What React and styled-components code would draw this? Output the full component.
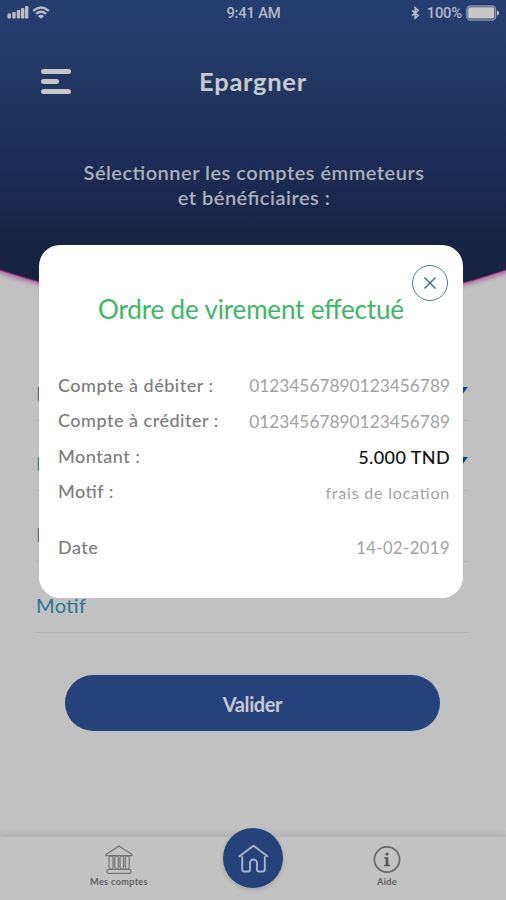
import React from "react";
import styled, { createGlobalStyle } from "styled-components";

const details = [
  { label: "Compte à débiter :", value: "01234567890123456789", size: 17.3, space: 0.02 },
  { label: "Compte à créditer :", value: "01234567890123456789", size: 17.3, space: 0.02 },
  { label: "Montant :", value: "5.000 TND", size: 18, space: 0.4, strong: true },
  { label: "Motif :", value: "frais de location", size: 16, space: 0.8 },
  { label: "Date", value: "14-02-2019", size: 16.5, space: 0.5, gap: 20 },
];

const fields = [
  { label: "Bt", select: true },
  { label: "Pr", select: true },
  { label: "Mt" },
  { label: "Motif" },
];

const App = () => {
  return (
    <>
      <GlobalStyle />
      <Screen>
        <Header>
          <HeaderShape />
          <StatusBar>
            <Signal />
            <span>9:41 AM</span>
            <Battery />
          </StatusBar>
          <TitleRow>
            <MenuButton aria-label="Menu">
              <MenuLine />
              <MenuLine $short />
              <MenuLine />
            </MenuButton>
            <Title>Epargner</Title>
          </TitleRow>
          <Subtitle>
            <div>Sélectionner les comptes émmeteurs</div>
            <div>et bénéficiaires :</div>
          </Subtitle>
        </Header>
        <Form>
          {fields.map((field) => (
            <Field key={field.label}>
              {field.label}
              {field.select && <Arrow />}
            </Field>
          ))}
          <SubmitButton>Valider</SubmitButton>
        </Form>
        <BottomNav>
          <NavItem>
            <BankIcon />
            <span>Mes comptes</span>
          </NavItem>
          <HomeButton aria-label="Accueil">
            <HomeIcon />
          </HomeButton>
          <NavItem>
            <InfoIcon />
            <span>Aide</span>
          </NavItem>
        </BottomNav>
        <Modal role="dialog">
          <CloseButton aria-label="Fermer">
            <svg width="12" height="12" viewBox="0 0 12 12" fill="none" stroke="#356682" strokeWidth="1.4">
              <path d="M.5.5l11 11M11.5.5l-11 11" />
            </svg>
          </CloseButton>
          <ModalTitle>Ordre de virement effectué</ModalTitle>
          <DetailList>
            {details.map((row) => (
              <DetailRow key={row.label} $gap={row.gap}>
                <DetailLabel>{row.label}</DetailLabel>
                <DetailValue $size={row.size} $space={row.space} $strong={row.strong}>
                  {row.value}
                </DetailValue>
              </DetailRow>
            ))}
          </DetailList>
        </Modal>
      </Screen>
    </>
  );
};
export default App;

const HeaderShape = () => (
  <Backdrop width="506" height="330" viewBox="0 0 506 330">
    <defs>
      <linearGradient id="night" x1="0" y1="0" x2="0" y2="1">
        <stop offset="0" stopColor="#253f72" />
        <stop offset="0.3" stopColor="#20365f" />
        <stop offset="0.5" stopColor="#1c2e58" />
        <stop offset="0.75" stopColor="#172444" />
        <stop offset="1" stopColor="#14203d" />
      </linearGradient>
      <filter id="glow" x="-5%" y="-10%" width="110%" height="130%">
        <feGaussianBlur stdDeviation="2.6" />
      </filter>
    </defs>
    <path d="M-10 267Q253 354 516 267" fill="none" stroke="#a0408c" strokeWidth="4" filter="url(#glow)" />
    <path d="M0 0H506V270Q253 354 0 270Z" fill="url(#night)" />
    <path d="M0 270Q253 354 506 270" fill="none" stroke="#8c2878" strokeWidth="1" />
  </Backdrop>
);

const Signal = () => (
  <svg width="46" height="16" viewBox="0 0 46 16" fill="#b9bec9">
    <rect x="0.5" y="8.5" width="3.4" height="5" rx="0.8" />
    <rect x="5.3" y="7" width="3.4" height="6.5" rx="0.8" />
    <rect x="9.8" y="5" width="3.4" height="8.5" rx="0.8" />
    <rect x="14" y="3" width="3.4" height="10.5" rx="0.8" />
    <rect x="18" y="1" width="3.4" height="12.5" rx="0.8" />
    <g fill="none" stroke="#b9bec9" strokeWidth="2.3">
      <path d="M26.2 5.9Q34 -0.8 41.8 5.9" />
      <path d="M29 8.8Q34 4.6 39 8.8" />
    </g>
    <path d="M31 11Q34 8.6 37 11L34 13.8Z" />
  </svg>
);

const Battery = () => (
  <BatteryBox>
    <svg width="9" height="14" viewBox="0 0 10 16" fill="none" stroke="#b9bec9" strokeWidth="1.7">
      <path d="M1 5l7 6-3.4 3V2L8 5l-7 6" />
    </svg>
    <span>100%</span>
    <svg width="34" height="16" viewBox="0 0 34 16">
      <rect x="1" y="1" width="28.5" height="14" rx="3.5" fill="none" stroke="#8c95a9" strokeWidth="1.6" />
      <rect x="2.2" y="2.2" width="26" height="11.2" rx="2" fill="#c8c8c8" />
      <path d="M31 5.5q2.2.8 2.2 2.5t-2.2 2.5z" fill="#b9bec9" />
    </svg>
  </BatteryBox>
);

const Arrow = () => (
  <svg width="12" height="8" viewBox="0 0 12 8">
    <path d="M0 0H12L6 8Z" fill="#104a86" />
  </svg>
);

const BankIcon = () => (
  <svg width="28" height="29" viewBox="0 0 28 29" fill="none" stroke="#747474" strokeWidth="1.2" strokeLinejoin="round">
    <path d="M1 9.5L14 1l13 8.5v1.2H1z" />
    <rect x="4" y="11" width="4" height="13" rx="1.8" />
    <rect x="9.7" y="11" width="3.6" height="13" rx="1.8" />
    <rect x="15" y="11" width="3.6" height="13" rx="1.8" />
    <rect x="20.3" y="11" width="4" height="13" rx="1.8" />
    <rect x="2" y="24.5" width="24" height="3.8" rx="1.2" />
  </svg>
);

const HomeIcon = () => (
  <svg width="31" height="29" viewBox="0 0 31 29" fill="none" stroke="#a9b5ca" strokeWidth="1.9" strokeLinejoin="round" strokeLinecap="round">
    <path d="M1.5 12.2L15.5 1.8l14 10.4" />
    <path d="M4.2 13V25.5a2 2 0 0 0 2 2H10a2 2 0 0 0 2-2V19a3.5 3.5 0 0 1 7 0v6.5a2 2 0 0 0 2 2h3.8a2 2 0 0 0 2-2V13" />
  </svg>
);

const InfoIcon = () => (
  <svg width="28" height="29" viewBox="0 0 28 29">
    <circle cx="14" cy="14.5" r="12.6" fill="none" stroke="#666666" strokeWidth="1.6" />
    <circle cx="14" cy="9" r="1.6" fill="#555555" />
    <path d="M11.2 12.2h4.1v7.5h1.7v1.6h-5.8v-1.6h1.5v-5.9h-1.5z" fill="#555555" />
  </svg>
);

const GlobalStyle = createGlobalStyle`
  body {
    margin: 0;
    background: #c1c1c1;
  }
  * {
    box-sizing: border-box;
  }
  button {
    border: none;
    padding: 0;
    font-family: inherit;
    cursor: pointer;
  }
`;
const Screen = styled.main`
  position: relative;
  width: 506px;
  height: 900px;
  display: flex;
  flex-direction: column;
  overflow: hidden;
  background: #c1c1c1;
  font-family: Lato, Carlito, sans-serif;
  font-feature-settings: "liga" 1;
`;
const Header = styled.header`
  position: relative;
  height: 350px;
  flex: none;
  color: #c6c9cf;
`;
const Backdrop = styled.svg`
  position: absolute;
  top: 0;
  left: 0;
`;
const StatusBar = styled.div`
  position: relative;
  display: grid;
  grid-template-columns: 1fr auto 1fr;
  align-items: center;
  height: 25px;
  padding: 0 6px 0 7px;
  font-family: Roboto, sans-serif;
  font-size: 14.8px;
  font-weight: 500;
  letter-spacing: -0.2px;
  color: #b3b9c5;
`;
const BatteryBox = styled.div`
  display: flex;
  justify-content: flex-end;
  align-items: center;
  gap: 4px;

  span {
    margin-left: 3px;
  }
`;
const TitleRow = styled.div`
  position: relative;
  display: grid;
  grid-template-columns: 41px 1fr 41px;
  align-items: center;
  margin-top: 35px;
  height: 42px;
`;
const MenuButton = styled.button`
  display: flex;
  flex-direction: column;
  gap: 5px;
  width: 30px;
  margin-left: 41px;
  background: none;
`;
const MenuLine = styled.span`
  width: ${(props) => (props.$short ? "18px" : "30px")};
  height: 5px;
  border-radius: 2.5px;
  background: #c5c7ca;
`;
const Title = styled.h1`
  margin: 0;
  text-align: center;
  font-size: 25.5px;
  font-weight: 700;
  letter-spacing: 0.7px;
`;
const Subtitle = styled.div`
  position: relative;
  margin-top: 58px;
  padding-left: 2px;
  text-align: center;
  font-size: 20px;
  line-height: 25px;
  font-weight: 600;
  letter-spacing: 0.5px;
  color: #abb0ba;
`;
const Form = styled.section`
  flex: 1;
  display: flex;
  flex-direction: column;
  padding: 0 38px 0 36px;
`;
const Field = styled.div`
  display: flex;
  justify-content: space-between;
  align-items: flex-end;
  height: 70.7px;
  padding-bottom: 15px;
  border-bottom: 1.5px solid #b1b1b1;
  font-size: 20px;
  line-height: 24px;
  letter-spacing: 0.4px;
  color: #287696;

  svg {
    margin-bottom: 10px;
  }
`;
const SubmitButton = styled.button`
  width: 375px;
  height: 56px;
  margin: 42px 0 0 29px;
  padding-top: 2px;
  border-radius: 28px;
  background: #26427b;
  color: #c5c9d2;
  font-size: 20px;
  font-weight: 700;
  letter-spacing: -0.4px;
`;
const BottomNav = styled.nav`
  display: grid;
  grid-template-columns: 1fr 60px 1fr;
  height: 63px;
  flex: none;
  background: #c2c2c2;
  box-shadow: 0 -4px 5px rgba(0, 0, 0, 0.07);
`;
const NavItem = styled.div`
  display: flex;
  flex-direction: column;
  align-items: center;
  gap: 2px;
  padding: 8px 0 0 15px;
  color: #606060;
  font-size: 9.2px;
  line-height: 12px;
  font-weight: 700;
  letter-spacing: 0.3px;

  &:last-child {
    padding: 8px 15px 0 0;
  }
`;
const HomeButton = styled.button`
  display: flex;
  align-items: center;
  justify-content: center;
  width: 60px;
  height: 60px;
  margin-top: -9px;
  border-radius: 50%;
  background: #26427b;
  box-shadow: 0 2px 5px rgba(0, 0, 0, 0.15);
`;
const Modal = styled.section`
  position: absolute;
  top: 245px;
  left: 39px;
  width: 424px;
  height: 353px;
  border-radius: 21px;
  background: #ffffff;
`;
const CloseButton = styled.button`
  position: absolute;
  top: 20px;
  right: 15px;
  display: flex;
  align-items: center;
  justify-content: center;
  width: 36px;
  height: 36px;
  border: 1.5px solid #4b7b94;
  border-radius: 50%;
  background: none;
`;
const ModalTitle = styled.h2`
  margin: 47px 0 0;
  text-align: center;
  color: #3cb865;
  font-size: 26px;
  line-height: 34px;
  font-weight: 400;
  letter-spacing: -0.15px;
`;
const DetailList = styled.div`
  margin-top: 41px;
  padding: 0 13px 0 19px;
`;
const DetailRow = styled.div`
  display: flex;
  align-items: center;
  justify-content: space-between;
  height: 35.5px;
  margin-top: ${(props) => props.$gap || 0}px;
  white-space: nowrap;
`;
const DetailLabel = styled.span`
  color: #7c7c7c;
  font-size: 18px;
  font-weight: 500;
  letter-spacing: 0.5px;
`;
const DetailValue = styled.span`
  padding-top: 2px;
  color: ${(props) => (props.$strong ? "#111111" : "#a2a2a2")};
  font-size: ${(props) => props.$size}px;
  font-weight: ${(props) => (props.$strong ? 500 : 400)};
  letter-spacing: ${(props) => props.$space}px;
`;
